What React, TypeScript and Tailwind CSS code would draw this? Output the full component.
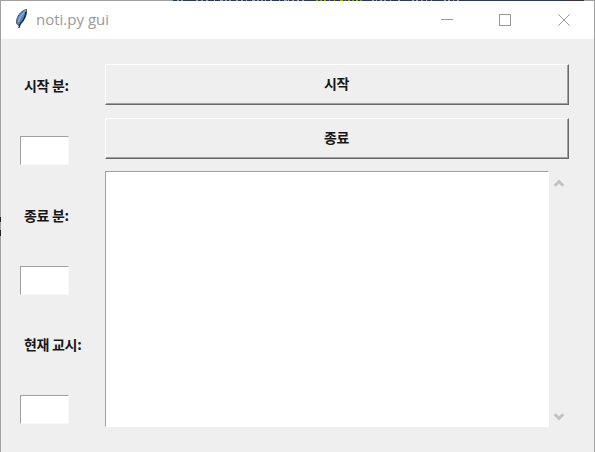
const korean = "font-['Noto_Sans_CJK_KR',sans-serif]";

function Feather() {
  return (
    <svg width="14" height="22" viewBox="0 0 14 22" className="-mt-[2px] ml-[14px] shrink-0">
      <path d="M11.5 1.5C7.5 2 3 6.5 1.8 11.5L1.5 15L3.3 17.5L6 15.5C9.5 12.5 12 6 11.5 1.5Z" fill="#4f86c6" stroke="#4a525c" strokeWidth="1" />
      <path d="M9.3 4.5C6.2 7 4.2 10 3.4 14" fill="none" stroke="#7db0e8" strokeWidth="1.6" />
      <path d="M11 3.5C10.5 8 8.5 12.5 5.5 15.5L3.8 20" fill="none" stroke="#1d232b" strokeWidth="1.3" />
      <path d="M11 2L9 3.6" stroke="#9aa1a8" strokeWidth="1.4" />
    </svg>
  );
}

function Backdrop() {
  const pieces: [number, number, string][] = [
    [171, 2, '#8798b0'], [177, 2, '#9795a3'], [181, 2, '#91a6b4'],
    [196, 2, '#a5a0ab'], [201, 2, '#7891a4'], [206, 2, '#b19b9b'], [214, 1, '#a3b4c3'],
    [220, 3, '#8d9db2'], [225, 2, '#ab9ca8'], [229, 2, '#8299b1'], [236, 2, '#a9a3a4'],
    [241, 2, '#8fa2b4'], [246, 1, '#aa9795'], [252, 3, '#93a3b5'], [257, 2, '#ab99a1'],
    [261, 2, '#8099ad'], [265, 1, '#adaab0'], [270, 2, '#a2acb5'], [279, 1, '#a1a0a8'],
    [284, 3, '#88a0b0'], [288, 1, '#bbaaa5'], [292, 2, '#8d9fae'], [297, 2, '#b1a5a7'], [302, 2, '#95a3af'],
    [316, 2, '#9baa19'], [320, 2, '#7e9321'], [324, 2, '#9a9e1d'], [329, 1, '#ba8a32'], [334, 1, '#91a923'],
    [340, 3, '#a6a71b'], [345, 1, '#829d23'], [348, 2, '#a3a620'], [352, 2, '#75932c'], [356, 2, '#a6a51b'], [360, 2, '#7e9722'],
    [372, 2, '#aaa1ac'], [376, 1, '#8aa3bb'], [380, 2, '#a6a2a9'], [384, 2, '#829caf'], [390, 1, '#ad9b9a'], [398, 2, '#9ba8b6'],
    [412, 2, '#8da3b4'], [416, 2, '#b1a0a5'], [421, 2, '#8297aa'], [426, 1, '#ae9aa1'], [431, 1, '#9faab2'],
    [444, 2, '#8aa2b6'], [448, 2, '#a9a0a8'], [453, 1, '#8f9fad'], [457, 2, '#b2979b'],
  ];
  return (
    <svg className="block shrink-0" width="595" height="1" shapeRendering="crispEdges">
      <path d="M0 0H595V1H0Z" fill="#a0a0a0" />
      <path d="M171 0H563V1H171Z" fill="#273955" />
      <path d="M563 0H584V1H563Z" fill="#353333" />
      {pieces.map(([x, w, color]) => <rect key={x} x={x} y="0" width={w} height="1" fill={color} />)}
    </svg>
  );
}

function TitleBar() {
  return (
    <header className="flex h-[38px] shrink-0 items-center bg-white">
      <Feather />
      <h1 className="-mt-[2px] ml-[7px] font-['Open_Sans',sans-serif] text-[15px] leading-5 text-[#999999]">noti.py gui</h1>
      <svg className="ml-auto mr-[23px]" width="130" height="14" viewBox="0 0 130 14" fill="none" stroke="#999999">
        <path d="M0 6.5H12" />
        <rect x="58.5" y="1.5" width="11" height="11" />
        <path d="M117.5 1.5L128.5 12.5M128.5 1.5L117.5 12.5" />
      </svg>
    </header>
  );
}

function Field({ label }: { label: string }) {
  return (
    <label className="block h-[129.5px]">
      <span className={`block h-[61px] whitespace-nowrap pl-1 text-[14px] font-bold leading-5 tracking-[-0.3px] text-[#171717] ${korean}`}>{label}</span>
      <input aria-label={label} className="block h-[29px] w-[49px] border border-t-[#a0a0a0] border-l-[#a0a0a0] border-r-[#f8f8f8] border-b-[#f8f8f8] bg-white px-1 text-sm outline-none" />
    </label>
  );
}

function Action({ label }: { label: string }) {
  return (
    <button className="flex h-[41px] w-[464px] border border-t-white border-l-white border-r-[#696969] border-b-[#696969]">
      <span className={`flex h-[39px] w-full items-center justify-center border-r border-b border-[#a0a0a0] pb-[2px] text-[14px] font-bold leading-5 tracking-[-0.3px] text-[#171717] ${korean}`}>{label}</span>
    </button>
  );
}

export default function App() {
  return (
    <div className="flex h-[452px] w-[595px] flex-col overflow-hidden bg-[#efefef]">
      <Backdrop />
      <div className="relative flex min-h-0 flex-1 flex-col border-x border-[#a0a0a0]">
        <TitleBar />
        <main className="flex min-h-0 flex-1">
          <aside className="w-[104px] shrink-0 pl-[19px] pt-9">
            <Field label="시작 분:" />
            <Field label="종료 분:" />
            <Field label="현재 교시:" />
          </aside>
          <section className="flex w-[464px] flex-col pt-[25px]">
            <Action label="시작" />
            <div className="h-[13px]" />
            <Action label="종료" />
            <div className="mt-3 flex h-[256px]">
              <textarea aria-label="로그" className="block h-full w-[444px] resize-none border border-t-[#a0a0a0] border-l-[#a0a0a0] border-r-white border-b-white bg-white outline-none" />
              <div className="flex w-5 flex-col items-center justify-between pb-[6px] pt-2">
                <svg width="10" height="9" viewBox="0 0 10 9" fill="none" stroke="#c2c2c2" strokeWidth="2.7"><path d="M0.8 6.7L5 2.5L9.2 6.7" /></svg>
                <svg width="10" height="9" viewBox="0 0 10 9" fill="none" stroke="#c2c2c2" strokeWidth="2.7"><path d="M0.8 2.3L5 6.5L9.2 2.3" /></svg>
              </div>
            </div>
          </section>
        </main>
        <div className="absolute -left-px top-[216px] h-[5px] w-px bg-[#222222]" />
        <div className="absolute -left-px top-[229px] h-[6px] w-px bg-[#222222]" />
      </div>
    </div>
  );
}
